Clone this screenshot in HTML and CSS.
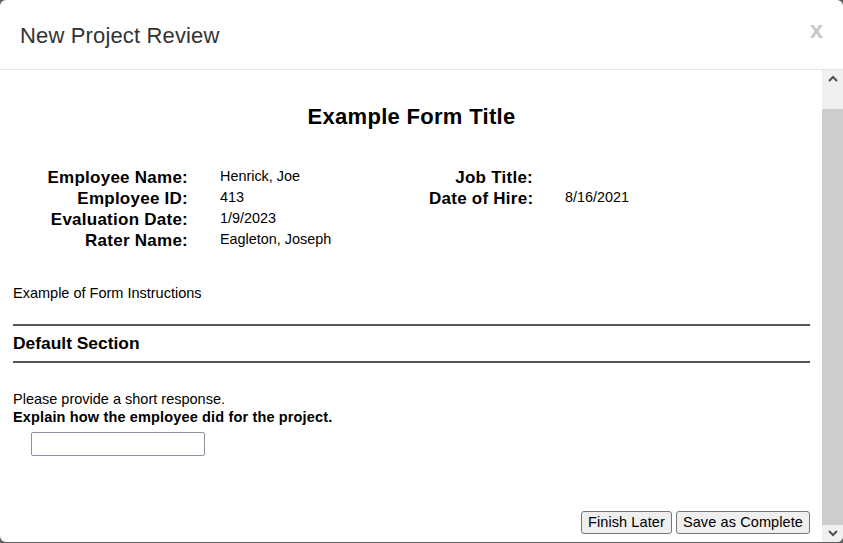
FILE: index.html
```html
<!DOCTYPE html>
<html lang="en">
<head>
<meta charset="utf-8">
<title>New Project Review</title>
<link rel="stylesheet" href="styles.css">
</head>
<body>
<div class="dialog">
  <header class="dialog-header">
    <h1 class="dialog-title">New Project Review</h1>
    <span class="dialog-close">x</span>
  </header>
  <div class="dialog-main">
    <div class="dialog-body">
      <h2 class="form-title">Example Form Title</h2>
      <div class="info-grid">
        <div class="info-label">Employee Name:</div>
        <div class="info-value">Henrick, Joe</div>
        <div class="info-label">Job Title:</div>
        <div class="info-value"></div>

        <div class="info-label">Employee ID:</div>
        <div class="info-value">413</div>
        <div class="info-label">Date of Hire:</div>
        <div class="info-value">8/16/2021</div>

        <div class="info-label">Evaluation Date:</div>
        <div class="info-value">1/9/2023</div>
        <div class="info-label"></div>
        <div class="info-value"></div>

        <div class="info-label">Rater Name:</div>
        <div class="info-value">Eagleton, Joseph</div>
        <div class="info-label"></div>
        <div class="info-value"></div>
      </div>
      <p class="instructions">Example of Form Instructions</p>
      <div class="section-header">Default Section</div>
      <div class="question">
        <div class="question-hint">Please provide a short response.</div>
        <div class="question-text">Explain how the employee did for the project.</div>
        <input class="question-input" type="text">
      </div>
      <div class="actions">
        <button class="btn">Finish Later</button>
        <button class="btn">Save as Complete</button>
      </div>
    </div>
    <div class="scrollbar">
      <div class="scroll-btn">
        <svg width="10" height="7" viewBox="0 0 10 7"><polyline points="1,6 5,2 9,6" fill="none" stroke="#505050" stroke-width="2"/></svg>
      </div>
      <div class="scroll-track"><div class="scroll-thumb"></div></div>
      <div class="scroll-btn">
        <svg width="10" height="7" viewBox="0 0 10 7"><polyline points="1,1 5,5 9,1" fill="none" stroke="#505050" stroke-width="2"/></svg>
      </div>
    </div>
  </div>
</div>
</body>
</html>
```

FILE: styles.css
```css
html, body {
  margin: 0;
  padding: 0;
  height: 100%;
  background: #5f5f5f;
  overflow: hidden;
}

body {
  font-family: "Liberation Sans", Arial, sans-serif;
  color: #000;
}

.dialog {
  width: 843px;
  height: 542px;
  background: #fff;
  border-radius: 6px;
  overflow: hidden;
  display: flex;
  flex-direction: column;
}

.dialog-header {
  height: 70px;
  box-sizing: border-box;
  padding: 18px 20px 0 20px;
  border-bottom: 1px solid #e5e5e5;
  display: flex;
  justify-content: space-between;
  align-items: flex-start;
  flex: none;
}

.dialog-title {
  margin: 6px 0 0 0;
  font-size: 22px;
  letter-spacing: 0.15px;
  line-height: 24px;
  font-weight: normal;
  color: #333;
}

.dialog-close {
  font-size: 24px;
  line-height: 24px;
  font-weight: bold;
  color: #c8c8c8;
}

.dialog-main {
  flex: 1;
  display: flex;
  min-height: 0;
}

.dialog-body {
  flex: 1;
  padding: 0 12px 0 13px;
  display: flex;
  flex-direction: column;
}

.form-title {
  margin: 34px 0 0 0;
  font-size: 22px;
  letter-spacing: 0.3px;
  line-height: 25px;
  font-weight: bold;
  text-align: center;
}

.info-grid {
  margin-top: 38px;
  display: grid;
  grid-template-columns: 175px 177px 104px 1fr;
  grid-auto-rows: 21px;
  column-gap: 32px;
}

.info-label {
  font-size: 17px;
  letter-spacing: 0.25px;
  line-height: 21px;
  font-weight: bold;
  text-align: right;
  white-space: nowrap;
}

.info-value {
  font-size: 14.4px;
  line-height: 16px;
  padding-top: 1px;
  white-space: nowrap;
}

.instructions {
  margin: 34px 0 0 0;
  font-size: 14.5px;
  line-height: 17px;
}

.section-header {
  margin-top: 22px;
  border-top: 2px solid #555;
  border-bottom: 2px solid #555;
  padding-top: 1px;
  height: 34px;
  line-height: 32px;
  font-size: 17.4px;
  font-weight: bold;
}

.question {
  margin-top: 27px;
  font-size: 14.5px;
  line-height: 18px;
  display: flex;
  flex-direction: column;
  align-items: flex-start;
}

.question-text {
  font-weight: bold;
  letter-spacing: 0.15px;
}

.question-input {
  margin: 6px 0 0 18px;
  width: 174px;
  height: 24px;
  box-sizing: border-box;
  border: 1px solid #8f8f9d;
  border-radius: 2px;
  background: #fff;
  padding: 1px 4px;
  font: inherit;
}

.actions {
  margin-top: auto;
  padding-bottom: 8px;
  display: flex;
  justify-content: flex-end;
  gap: 4px;
}

.btn {
  font-family: "Liberation Sans", Arial, sans-serif;
  font-size: 14.5px;
  letter-spacing: 0.1px;
  line-height: 17px;
  height: 23px;
  box-sizing: border-box;
  padding: 2px 6px;
  border: 1px solid #767676;
  border-radius: 3px;
  background: #efefef;
  color: #000;
}

.scrollbar {
  flex: none;
  width: 21px;
  background: #f0f0f0;
  display: flex;
  flex-direction: column;
}

.scroll-btn {
  height: 17px;
  display: flex;
  align-items: center;
  justify-content: center;
  flex: none;
}

.scroll-track {
  flex: 1;
  padding-top: 22px;
  display: flex;
  flex-direction: column;
}

.scroll-thumb {
  flex: 1;
  background: #cdcdcd;
}
```
